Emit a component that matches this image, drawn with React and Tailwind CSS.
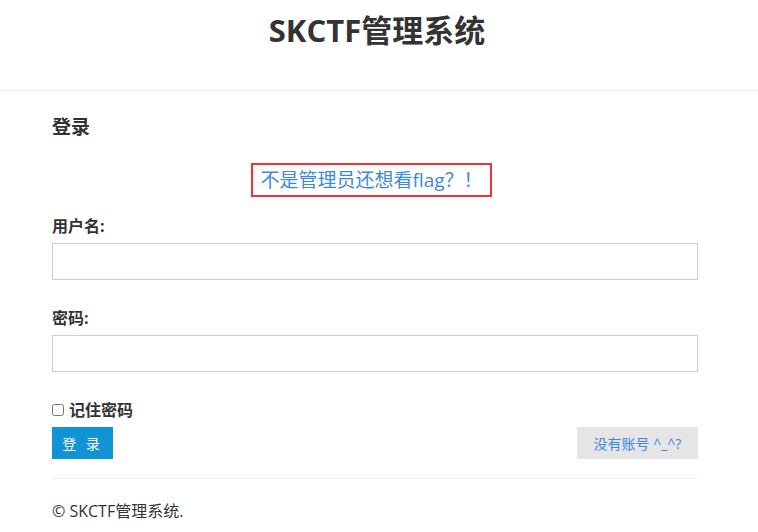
export default function App() {
  const font = { fontFamily: '"Open Sans", "Noto Sans CJK SC", sans-serif' };
  return (
    <div
      className="min-h-[532px] bg-white text-[#333]"
      style={font}
    >
      {/* Header */}
      <div className="h-[91px] border-b border-[#eee] flex justify-center">
        <h1 className="mt-[8px] -ml-[4px] text-[31px] leading-[44px] font-bold">
          SKCTF管理系统
        </h1>
      </div>

      <div className="mx-[52px] w-[646px]">
        <h2 className="mt-[23px] text-[19px] leading-[26px] font-bold">登录</h2>

        <div className="mt-[23px] flex justify-center">
          <a className="border-2 border-[#ee3333] px-[7px] text-[19px] leading-[30px] text-[#3c8adc] -ml-[7px]">
            不是管理员还想看flag？！
          </a>
        </div>

        <form className="mt-[18px]">
          <label className="block text-[16px] leading-[22px] font-bold">用户名:</label>
          <input
            type="text"
            className="mt-[6px] block w-full h-[37px] border border-[#ccc] outline-none"
          />

          <label className="block mt-[27px] text-[16px] leading-[22px] font-bold">密码:</label>
          <input
            type="password"
            className="mt-[6px] block w-full h-[37px] border border-[#ccc] outline-none"
          />

          <div className="mt-[27px] flex items-center gap-[5px]">
            <input type="checkbox" className="w-[12px] h-[12px] m-0" />
            <span className="text-[16px] leading-[22px] font-bold">记住密码</span>
          </div>

          <div className="mt-[6px] flex justify-between">
            <button
              type="button"
              className="w-[61px] h-[32px] bg-[#1193d4] text-white text-[14px] tracking-[3px]"
            >
              登 录
            </button>
            <button
              type="button"
              className="w-[121px] h-[32px] bg-[#e5e5e5] text-[#3c8adc] text-[14px]"
            >
              没有账号 ^_^?
            </button>
          </div>
        </form>

        <hr className="mt-[19px] border-t border-[#eee]" />

        <p className="mt-[21px] text-[16px] leading-[22px]">© SKCTF管理系统.</p>
      </div>
    </div>
  );
}
